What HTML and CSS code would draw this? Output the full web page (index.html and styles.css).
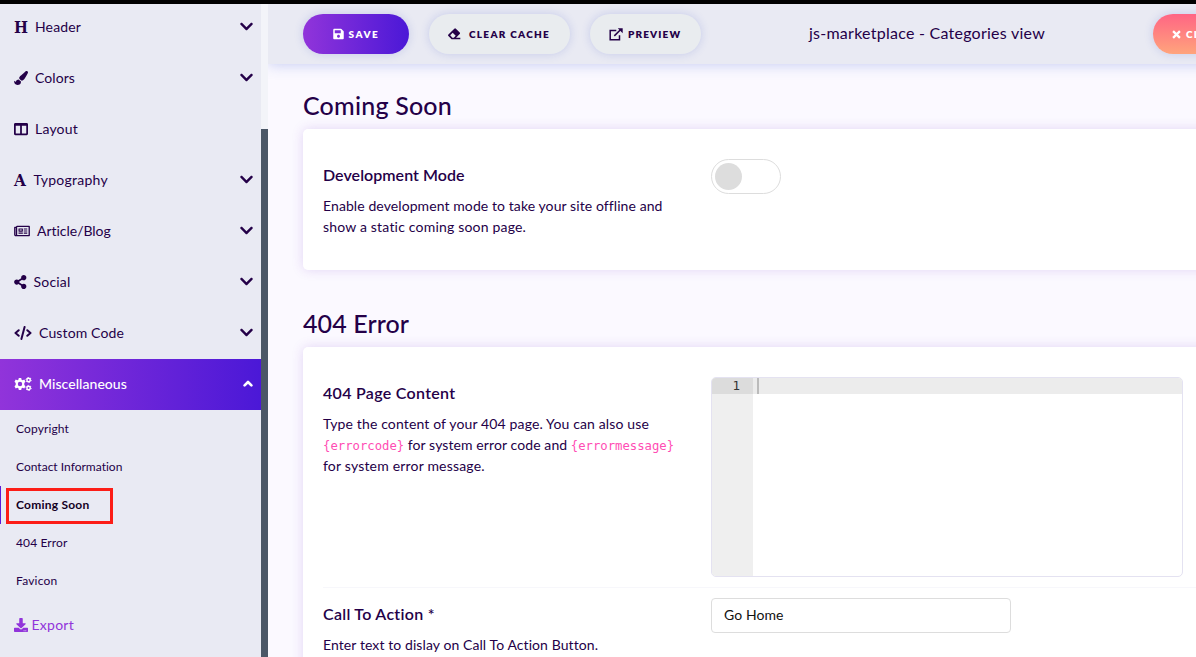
FILE: index.html
```html
<!DOCTYPE html>
<html lang="en">
<head>
<meta charset="utf-8">
<title>js-marketplace - Categories view</title>
<link rel="stylesheet" href="styles.css">
</head>
<body>
<svg class="defs" width="0" height="0" aria-hidden="true">
  <symbol id="down" viewBox="0 0 448 512"><path d="M207.029 381.476L12.686 187.132c-9.373-9.373-9.373-24.569 0-33.941l22.667-22.667c9.357-9.357 24.522-9.375 33.901-.04L224 284.505l154.745-154.021c9.379-9.335 24.544-9.317 33.901.04l22.667 22.667c9.373 9.373 9.373 24.569 0 33.941L240.971 381.476c-9.373 9.372-24.569 9.372-33.942 0z"/></symbol>
</svg>
<div class="app">
  <aside class="sidebar">
    <nav class="menu">
      <a class="item"><span class="glyph glyph-h">H</span><span class="label t-header">Header</span><svg class="chev"><use href="#down"/></svg></a>
      <a class="item"><svg class="ico w14" viewBox="0 0 512 512"><path d="M167.02 309.34c-40.12 2.58-76.53 17.86-97.19 72.3-2.35 6.21-8 9.98-14.59 9.98-11.11 0-45.46-27.67-55.25-34.35C0 439.62 37.93 512 128 512c75.86 0 128-43.77 128-120.19 0-3.11-.65-6.08-.97-9.13l-88.01-73.34zM457.89 0c-15.16 0-29.37 6.71-40.21 16.45C213.27 199.05 192 203.34 192 257.09c0 13.7 3.25 26.76 8.73 38.7l63.82 53.18c7.21 1.8 14.64 3.03 22.39 3.03 62.11 0 98.11-45.47 211.16-256.46 7.38-14.35 13.9-29.85 13.9-45.99C512 20.64 486 0 457.89 0z"/></svg><span class="label t-colors">Colors</span><svg class="chev"><use href="#down"/></svg></a>
      <a class="item"><svg class="ico w14" viewBox="0 0 512 512"><path d="M464 32H48C21.49 32 0 53.49 0 80v352c0 26.51 21.49 48 48 48h416c26.51 0 48-21.49 48-48V80c0-26.51-21.49-48-48-48zM224 416H64V140h160v276zm224 0H288V140h160v276z"/></svg><span class="label t-wide">Layout</span></a>
      <a class="item"><span class="glyph glyph-a">A</span><span class="label t-typo">Typography</span><svg class="chev"><use href="#down"/></svg></a>
      <a class="item"><svg class="ico w16" viewBox="0 0 576 512"><path fill-rule="evenodd" d="M552 64H112c-20.900 0-38.700 13.400-45.300 32H24c-13.300 0-24 10.700-24 24v272c0 30.900 25.100 56 56 56h496c13.300 0 24-10.700 24-24V88c0-13.300-10.700-24-24-24zM48 392V144h16v248c0 4.400-3.600 8-8 8s-8-3.600-8-8zm480 8H111.400c.4-2.600.6-5.300.6-8V112h416v288zM172 280h136c6.600 0 12-5.400 12-12v-96c0-6.600-5.400-12-12-12H172c-6.600 0-12 5.400-12 12v96c0 6.600 5.400 12 12 12zm28-80h80v40h-80zM160 315h160v40H160zM352 315h128v40H352zM352 237h128v40H352zM352 160h128v40H352z"/></svg><span class="label t-article">Article/Blog</span><svg class="chev"><use href="#down"/></svg></a>
      <a class="item"><svg class="ico w12" viewBox="0 0 448 512"><path d="M352 320c-22.608 0-43.387 7.819-59.79 20.895l-102.486-64.054a96.551 96.551 0 0 0 0-41.683l102.486-64.054C308.613 184.181 329.392 192 352 192c53.019 0 96-42.981 96-96S405.019 0 352 0s-96 42.981-96 96c0 7.158.79 14.13 2.276 20.841L155.79 180.895C139.387 167.819 118.608 160 96 160c-53.019 0-96 42.981-96 96s42.981 96 96 96c22.608 0 43.387-7.819 59.79-20.895l102.486 64.054A96.301 96.301 0 0 0 256 416c0 53.019 42.981 96 96 96s96-42.981 96-96-42.981-96-96-96z"/></svg><span class="label t-wide">Social</span><svg class="chev"><use href="#down"/></svg></a>
      <a class="item"><svg class="ico w18 stroked" viewBox="0 0 18 14"><path d="M4.700 4.200 1.500 7l3.200 2.800M13.300 4.200 16.500 7l-3.200 2.800M10.600 1 7.400 13"/></svg><span class="label t-custom">Custom Code</span><svg class="chev"><use href="#down"/></svg></a>
      <a class="item active"><svg class="ico w18" viewBox="0 0 18 14"><path fill-rule="evenodd" d="M4.800 1h2.400l.4 1.700 1 .5 1.700-.6 1.200 2.100-1.200 1.300v2l1.200 1.300-1.200 2.100-1.700-.6-1 .5L7.200 13H4.800l-.4-1.700-1-.5-1.700.6L.5 9.300 1.700 8V6L.5 4.700l1.200-2.100 1.700.6 1-.5zM6 4.800a2.200 2.200 0 1 0 0 4.400 2.200 2.200 0 0 0 0-4.400z"/><g fill="none" stroke="currentColor"><circle cx="14.600" cy="3" r="1.700" stroke-width="1.500"/><circle cx="14.600" cy="11" r="1.700" stroke-width="1.500"/><circle cx="14.600" cy="3" r="2.600" stroke-width="1" stroke-dasharray="1.300 1.420"/><circle cx="14.600" cy="11" r="2.600" stroke-width="1" stroke-dasharray="1.300 1.420"/></g></svg><span class="label t-misc">Miscellaneous</span><svg class="chev up" viewBox="0 0 10 7"><path d="M1.600 5.400 5 2l3.400 3.400"/></svg></a>
    </nav>
    <nav class="submenu">
      <a class="sub t-copy">Copyright</a>
      <a class="sub">Contact Information</a>
      <a class="sub current">Coming Soon<span class="marker"></span></a>
      <a class="sub t-copy">404 Error</a>
      <a class="sub t-fav">Favicon</a>
    </nav>
    <a class="item export"><svg class="ico w14" viewBox="0 0 512 512"><path d="M216 0h80c13.300 0 24 10.700 24 24v168h87.700c17.800 0 26.700 21.500 14.100 34.100L269.700 378.300c-7.500 7.500-19.800 7.500-27.300 0L90.100 226.100c-12.600-12.600-3.700-34.100 14.100-34.100H192V24c0-13.300 10.700-24 24-24zm296 376v112c0 13.300-10.700 24-24 24H24c-13.300 0-24-10.700-24-24V376c0-13.300 10.700-24 24-24h146.700l49 49c20.100 20.100 52.500 20.100 72.600 0l49-49H488c13.300 0 24 10.700 24 24zm-124 88c0-11-9-20-20-20s-20 9-20 20 9 20 20 20 20-9 20-20zm64 0c0-11-9-20-20-20s-20 9-20 20 9 20 20 20 20-9 20-20z"/></svg><span class="label">Export</span></a>
  </aside>
  <div class="scroll"><div class="thumb"></div></div>
  <main class="main">
    <header class="toolbar">
      <button class="btn save"><svg class="bi" viewBox="0 0 448 512"><path d="M433.941 129.941l-83.882-83.882A48 48 0 0 0 316.118 32H48C21.490 32 0 53.490 0 80v352c0 26.510 21.490 48 48 48h352c26.510 0 48-21.490 48-48V163.882a48 48 0 0 0-14.059-33.941zM224 416c-35.346 0-64-28.654-64-64 0-35.346 28.654-64 64-64s64 28.654 64 64c0 35.346-28.654 64-64 64zm96-304.520V212c0 6.627-5.373 12-12 12H76c-6.627 0-12-5.373-12-12V108c0-6.627 5.373-12 12-12h228.520c3.183 0 6.235 1.264 8.485 3.515l3.480 3.480A11.996 11.996 0 0 1 320 111.480z"/></svg><span>SAVE</span></button>
      <button class="btn clear"><svg class="bi" viewBox="0 0 13 12"><path fill-rule="evenodd" d="M.4 6.500 6.300.7q.8-.7 1.600 0l3.800 3.700q.7.700 0 1.500L8 9.800h4.300v1.500H3.600L.4 8.100q-.7-.8 0-1.600zM4.700 4.700 2.200 7.300 4.400 9.700h1.400L7.700 7.700z"/></svg><span>CLEAR CACHE</span></button>
      <button class="btn preview"><svg class="bi" viewBox="0 0 14 13"><path fill="none" stroke="currentColor" stroke-width="1.500" d="M7.300 2.500H1.200v9.300h9.300V7.300M5.300 7.900l6.200-6.200"/><path d="M8.800.3h4.900v4.900z"/></svg><span>PREVIEW</span></button>
      <div class="title">js-marketplace - Categories view</div>
      <button class="btn cancel"><svg class="bi" viewBox="0 0 10 10"><path fill="none" stroke="currentColor" stroke-width="2.500" d="m1.200 1.200 7.600 7.600m0-7.600L1.200 8.800"/></svg><span>CLOSE</span></button>
    </header>
    <div class="content">
      <h2 class="h-soon">Coming Soon</h2>
      <section class="card card-dev">
        <div class="info">
          <h3 class="l-dev">Development Mode</h3>
          <p><span class="l-enable">Enable development mode to take your site offline and</span><br><span class="l-show">show a static coming soon page.</span></p>
        </div>
        <div class="toggle"><span class="knob"></span></div>
      </section>
      <h2 class="h-error">404 Error</h2>
      <section class="card card-error">
        <div class="row row-page">
          <div class="info">
            <h3 class="l-page">404 Page Content</h3>
            <p><span class="l-type">Type the content of your 404 page. You can also use</span><br><code>{errorcode}</code> <span class="l-code">for system error code and</span> <code>{errormessage}</code><br><span class="l-show">for system error message.</span></p>
          </div>
          <div class="editor"><div class="gutter"><div class="num">1</div></div><div class="code"><div class="line"><span class="caret"></span></div></div></div>
        </div>
        <div class="row row-cta">
          <div class="info">
            <h3 class="l-cta">Call To Action *</h3>
            <p class="l-enable">Enter text to dislay on Call To Action Button.</p>
          </div>
          <div class="input">Go Home</div>
        </div>
      </section>
    </div>
  </main>
</div>
</body>
</html>
```
FILE: styles.css
```css
* { box-sizing: border-box; }
body { margin: 0; overflow: hidden; background: #fbf9ff; color: #240048; font-family: Lato, sans-serif; font-size: 14px; }
.defs { display: block; height: 0; }
.app { display: flex; width: 1196px; height: 657px; border-top: 4px solid #000; overflow: hidden; }

.sidebar { width: 261px; flex: none; background: #e9eaf3; overflow: hidden; }
.menu { margin-top: -2px; }
.item { display: flex; align-items: center; height: 51px; padding: 0 8px 2px 14px; }
.item.active { background: linear-gradient(90deg, #9134da, #4b18d7); color: #fff; }
.ico { height: 14px; flex: none; fill: currentColor; margin-right: 7px; }
.w12 { width: 12.500px; }
.w14 { width: 14px; }
.w16 { width: 16px; }
.w18 { width: 18px; }
.stroked { fill: none; stroke: currentColor; stroke-width: 2; stroke-linecap: round; stroke-linejoin: round; }
.glyph { width: 14px; margin-right: 7px; font-family: "DejaVu Serif", serif; font-weight: 700; font-size: 17px; line-height: 20px; transform-origin: 0 50%; }
.glyph-h { transform: scaleX(.87); }
.glyph-a { width: 12.500px; transform: scaleX(.9); }
.label { flex: 1; line-height: 20px; letter-spacing: .14px; white-space: nowrap; }
.t-colors { letter-spacing: .08px; }
.t-wide { letter-spacing: .2px; }
.t-typo { letter-spacing: .250px; }
.t-article { letter-spacing: -.023px; }
.t-misc { font-weight: 500; letter-spacing: .05px; }
.chev { width: 13px; height: 15px; flex: none; fill: currentColor; }
.chev.up { width: 10px; height: 7px; fill: none; stroke: currentColor; stroke-width: 2.600; stroke-linecap: round; stroke-linejoin: round; }

.sub { display: block; position: relative; height: 38px; padding-left: 16px; font-size: 12px; line-height: 38px; letter-spacing: .01px; }
.t-copy { letter-spacing: .125px; }
.t-fav { letter-spacing: .22px; }
.sub.current { font-weight: 700; color: #14001f; letter-spacing: .230px; border-left: 1px solid #5a1bd8; padding-left: 15px; }
.marker { position: absolute; left: 5px; top: 2px; width: 107px; height: 36px; border: 3px solid #fc1d17; }
.export { color: #9134da; }
.export .ico { margin-right: 3.500px; }
.export .label { letter-spacing: .250px; }

.scroll { width: 7px; flex: none; background: #f3f4f9; padding-top: 125px; }
.thumb { height: 528px; background: #4b5767; }

.main { flex: 1; min-width: 0; overflow: hidden; }
.toolbar { display: flex; align-items: center; width: 970px; height: 60px; padding-left: 35px; background: #e9eaf3; box-shadow: 0 0 14px rgba(56, 88, 205, .3); }
.btn { display: flex; align-items: center; flex: none; height: 40px; margin: 0 20px 0 0; padding: 0; border: 0; border-radius: 20px; background: #e9ecef; color: #240048; font: 800 10px/20px Lato, sans-serif; white-space: nowrap; box-shadow: 0 0 10px rgba(60, 80, 200, .2); }
.bi { flex: none; fill: currentColor; }
.save { width: 106px; padding-left: 30px; background: linear-gradient(90deg, #9134da, #4b18d7); color: #fff; letter-spacing: 1.500px; }
.save .bi { width: 11px; height: 12px; margin-right: 4.500px; }
.clear { width: 141px; padding-left: 19px; letter-spacing: 1.280px; }
.clear .bi { width: 13px; height: 12px; margin-right: 8px; }
.preview { width: 111px; padding-left: 19px; letter-spacing: 1.130px; }
.preview .bi { width: 14px; height: 13px; margin-right: 5px; }
.title { width: 236px; margin-left: 88px; padding-bottom: 3px; font-size: 16px; letter-spacing: .250px; white-space: nowrap; }
.cancel { width: 120px; margin-left: 108px; padding-left: 19px; background: linear-gradient(180deg, #ff6584, #ffa47c); color: #fff; letter-spacing: 1.300px; }
.cancel .bi { width: 9px; height: 9px; margin-right: 5px; }

.content { padding: 24px 0 0 35px; }
h2, h3, p { margin: 0; font-weight: 400; }
h2 { height: 41px; font-size: 25px; font-weight: 500; line-height: 34px; }
.h-soon { letter-spacing: .200px; }
.h-error { margin-top: 36px; letter-spacing: .100px; }
.card { width: 940px; padding: 30px 20px 0; border-radius: 5px; background: #fff; box-shadow: 0 0 12px rgba(115, 50, 200, .18); }
.card-dev { display: flex; height: 141px; }
.h-error + .card { height: 400px; }
.info { width: 388px; flex: none; }
h3 { height: 36px; font-size: 16px; font-weight: 600; line-height: 31px; }
p { line-height: 21px; white-space: nowrap; }
.l-dev { letter-spacing: .036px; }
.l-page { letter-spacing: .3px; }
.l-cta { letter-spacing: .280px; }
.l-enable { letter-spacing: .088px; }
.l-show { letter-spacing: .190px; }
.l-type { letter-spacing: .138px; }
.l-code { letter-spacing: .096px; }
code { color: #ff4db4; font: 12.250px/14px "DejaVu Sans Mono", monospace; }
.toggle { width: 70px; height: 35px; padding: 3px; border: 1px solid #ddd; border-radius: 18px; }
.knob { display: block; width: 27px; height: 27px; border-radius: 50%; background: #ddd; }
.row { display: flex; }
.row-page { height: 211px; border-bottom: 1px solid #f7f7fb; }
.editor { display: flex; width: 472px; height: 200px; border: 1px solid #e4e2f1; border-radius: 5px; overflow: hidden; }
.gutter { width: 41px; background: #efefef; }
.num { height: 16px; padding-right: 13px; background: #dcdcdc; color: #333; font: 12.500px/16px "DejaVu Sans Mono", monospace; text-align: right; }
.code { flex: 1; }
.line { height: 16px; padding-left: 4px; background: #ececec; }
.caret { display: block; width: 2px; height: 16px; background: #bbb; }
.row-cta { padding-top: 10px; }
.input { width: 300px; height: 35px; padding-left: 12px; border: 1px solid #ddd; border-radius: 4px; color: #111; line-height: 31px; letter-spacing: .074px; }
```
